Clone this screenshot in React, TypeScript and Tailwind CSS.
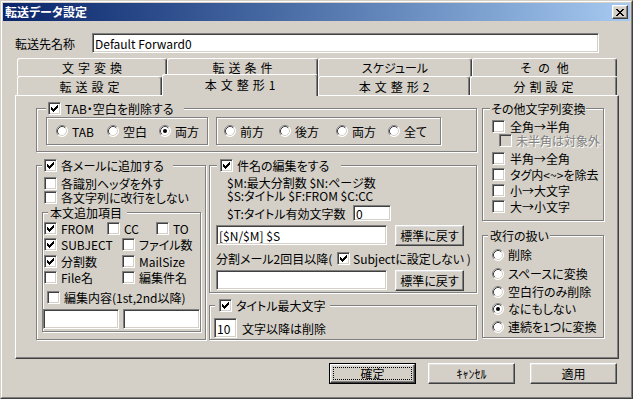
import React from "react";

function CheckMark() {
  return (
    <svg width="7" height="7" viewBox="0 0 7 7" shapeRendering="crispEdges" fill="#000">
      <rect x="6" y="0" width="1" height="1" />
      <rect x="5" y="1" width="2" height="1" />
      <rect x="0" y="2" width="1" height="1" />
      <rect x="4" y="2" width="3" height="1" />
      <rect x="0" y="3" width="2" height="1" />
      <rect x="3" y="3" width="3" height="1" />
      <rect x="0" y="4" width="5" height="1" />
      <rect x="1" y="5" width="3" height="1" />
      <rect x="2" y="6" width="1" height="1" />
    </svg>
  );
}

function Check({ on, dis }: { on?: boolean; dis?: boolean }) {
  return (
    <span
      className={`shrink-0 w-[13px] h-[13px] border border-t-[#808080] border-l-[#808080] border-b-white border-r-white shadow-[inset_1px_1px_0_#404040,inset_-1px_-1px_0_#d4d0c8] flex items-center justify-center ${
        dis ? "bg-[#d4d0c8]" : "bg-white"
      }`}
    >
      {on && <CheckMark />}
    </span>
  );
}

function Radio({ on }: { on?: boolean }) {
  return (
    <svg width="12" height="12" viewBox="0 0 12 12" className="shrink-0">
      <circle cx="6" cy="6" r="5.5" fill="#fff" />
      <path d="M2.11 9.89A5.5 5.5 0 0 1 9.89 2.11" stroke="#808080" fill="none" />
      <path d="M9.89 2.11A5.5 5.5 0 0 1 2.11 9.89" stroke="#fff" fill="none" />
      <path d="M2.82 9.18A4.5 4.5 0 0 1 9.18 2.82" stroke="#404040" fill="none" />
      <path d="M9.18 2.82A4.5 4.5 0 0 1 2.82 9.18" stroke="#d4d0c8" fill="none" />
      {on && <circle cx="6" cy="6" r="2" fill="#000" />}
    </svg>
  );
}

function CItem({
  on,
  className = "",
  children,
}: {
  on?: boolean;
  className?: string;
  children: React.ReactNode;
}) {
  return (
    <div className={`flex items-center gap-[4px] whitespace-nowrap shrink-0 ${className}`}>
      <Check on={on} />
      <span>{children}</span>
    </div>
  );
}

function RItem({
  on,
  className = "",
  children,
}: {
  on?: boolean;
  className?: string;
  children: React.ReactNode;
}) {
  return (
    <div className={`flex items-center gap-[4px] whitespace-nowrap shrink-0 ${className}`}>
      <Radio on={on} />
      <span>{children}</span>
    </div>
  );
}

function Group({
  className = "",
  legendClass = "",
  legend,
  children,
}: {
  className?: string;
  legendClass?: string;
  legend?: React.ReactNode;
  children?: React.ReactNode;
}) {
  return (
    <div
      className={`relative shrink-0 border border-[#808080] shadow-[inset_1px_1px_0_#fff,1px_1px_0_#fff] ${className}`}
    >
      {legend && (
        <div
          className={`absolute top-[-8px] h-[14px] flex items-center gap-[4px] bg-[#d4d0c8] whitespace-nowrap ${legendClass}`}
        >
          {legend}
        </div>
      )}
      {children}
    </div>
  );
}

function Field({ className = "", children }: { className?: string; children?: React.ReactNode }) {
  return (
    <div
      className={`shrink-0 bg-white border border-t-[#808080] border-l-[#808080] border-b-white border-r-white shadow-[inset_1px_1px_0_#404040,inset_-1px_-1px_0_#d4d0c8] flex items-center pl-[2px] whitespace-nowrap overflow-hidden ${className}`}
    >
      {children}
    </div>
  );
}

function Btn({ className = "", children }: { className?: string; children?: React.ReactNode }) {
  return (
    <div
      className={`shrink-0 bg-[#d4d0c8] border border-t-white border-l-white border-r-[#404040] border-b-[#404040] shadow-[inset_-1px_-1px_0_#808080,inset_1px_1px_0_#dfdfdf] flex items-center justify-center whitespace-nowrap ${className}`}
    >
      {children}
    </div>
  );
}

const tabBase =
  "shrink-0 border-t border-l border-r border-t-white border-l-white border-r-[#404040] shadow-[inset_-1px_0_0_#808080] rounded-t-[3px] bg-[#d4d0c8] flex items-center justify-center whitespace-nowrap";

export default function App() {
  return (
    <div className="w-[633px] h-[399px] overflow-hidden bg-[#d4d0c8] border border-t-[#d4d0c8] border-l-[#d4d0c8] border-r-[#404040] border-b-[#404040] text-[12px] leading-[13px] text-black font-['Noto_Sans_CJK_JP',sans-serif] [font-feature-settings:'palt']">
      <div className="h-full border border-t-white border-l-white border-r-[#808080] border-b-[#808080] p-px flex flex-col">
        {/* Title bar */}
        <div className="h-[18px] shrink-0 flex items-center bg-linear-to-r from-[#0a246a] to-[#a6caf0] pl-[2px] pr-[2px]">
          <span className="text-white font-bold text-[12px] leading-[14px]">転送データ設定</span>
          <Btn className="ml-auto w-[16px] h-[14px]">
            <svg width="8" height="7" viewBox="0 0 8 7" shapeRendering="crispEdges" fill="#000" className="ml-[-1px]">
              <rect x="0" y="0" width="2" height="1" />
              <rect x="6" y="0" width="2" height="1" />
              <rect x="1" y="1" width="2" height="1" />
              <rect x="5" y="1" width="2" height="1" />
              <rect x="2" y="2" width="4" height="1" />
              <rect x="3" y="3" width="2" height="1" />
              <rect x="2" y="4" width="4" height="1" />
              <rect x="1" y="5" width="2" height="1" />
              <rect x="5" y="5" width="2" height="1" />
              <rect x="0" y="6" width="2" height="1" />
              <rect x="6" y="6" width="2" height="1" />
            </svg>
          </Btn>
        </div>

        {/* Name row */}
        <div className="mt-[12px] h-[20px] shrink-0 flex items-center pl-[12px]">
          <span className="w-[77px] shrink-0">転送先名称</span>
          <Field className="w-[507px] h-[20px]">Default Forward0</Field>
        </div>

        {/* Tabs */}
        <div className="mt-[5px] ml-[14px] shrink-0 flex flex-col">
          <div className="flex h-[18px]">
            <div className={`${tabBase} h-full w-[150px] tracking-[4px] pl-[4px]`}>文字変換</div>
            <div className={`${tabBase} h-full w-[151px] tracking-[4px] pl-[4px]`}>転送条件</div>
            <div className={`${tabBase} h-full w-[154px]`}>スケジュール</div>
            <div className={`${tabBase} h-full w-[145px] tracking-[7px] pl-[7px]`}>その他</div>
          </div>
          <div className="flex h-[19px] items-start">
            <div className={`${tabBase} h-full w-[145px] tracking-[4px] pl-[4px]`}>転送設定</div>
            <div className={`${tabBase} relative z-10 mt-[-2px] h-[22px] w-[156px] tracking-[4px] pl-[4px] pb-[3px]`}>
              本文整形1
            </div>
            <div className={`${tabBase} h-full w-[152px] tracking-[4px] pl-[4px]`}>本文整形2</div>
            <div className={`${tabBase} h-full w-[147px] tracking-[4px] pl-[4px]`}>分割設定</div>
          </div>
        </div>

        {/* Panel */}
        <div className="ml-[12px] w-[604px] h-[264px] shrink-0 border border-t-white border-l-white border-r-[#404040] border-b-[#404040] shadow-[inset_-1px_-1px_0_#808080] flex pt-[12px] pl-[20px]">
          {/* Left column */}
          <div className="w-[441px] shrink-0 flex flex-col">
            <Group
              className="h-[44px] pt-[8px] pl-[9px] flex"
              legendClass="left-[9px] pl-[2px] pr-[10px]"
              legend={
                <>
                  <Check on />
                  <span>TAB・空白を削除する</span>
                </>
              }
            >
              <Group className="w-[162px] h-[28px] flex items-center pl-[9px]">
                <RItem className="w-[51px]">TAB</RItem>
                <RItem className="w-[52px]">空白</RItem>
                <RItem on>両方</RItem>
              </Group>
              <Group className="ml-[8px] w-[225px] h-[28px] flex items-center pl-[7px]">
                <RItem className="w-[55px]">前方</RItem>
                <RItem className="w-[57px]">後方</RItem>
                <RItem className="w-[52px]">両方</RItem>
                <RItem>全て</RItem>
              </Group>
            </Group>

            <div className="flex mt-[13px]">
              {/* 各メールに追加する */}
              <Group
                className="w-[170px] h-[175px] pt-[10px] pl-[5px] flex flex-col"
                legendClass="left-[5px] pl-[2px] pr-[9px]"
                legend={
                  <>
                    <Check on />
                    <span>各メールに追加する</span>
                  </>
                }
              >
                <CItem className="ml-[2px] h-[14px]">各識別ヘッダを外す</CItem>
                <CItem className="ml-[2px] h-[14px]">各文字列に改行をしない</CItem>
                <Group
                  className="mt-[8px] w-[159px] h-[120px] pt-[9px] pl-[1px] flex flex-col"
                  legendClass="left-[5px] pl-[2px] pr-[5px]"
                  legend={<span>本文追加項目</span>}
                >
                  <div className="flex h-[13px]">
                    <CItem on className="w-[63px]">FROM</CItem>
                    <CItem className="w-[49px]">CC</CItem>
                    <CItem>TO</CItem>
                  </div>
                  <div className="flex h-[13px] mt-[3px]">
                    <CItem on className="w-[78px]">SUBJECT</CItem>
                    <CItem>ファイル数</CItem>
                  </div>
                  <div className="flex h-[13px] mt-[4px]">
                    <CItem on className="w-[78px]">分割数</CItem>
                    <CItem>MailSize</CItem>
                  </div>
                  <div className="flex h-[13px] mt-[3px]">
                    <CItem className="w-[78px]">File名</CItem>
                    <CItem>編集件名</CItem>
                  </div>
                  <div className="flex h-[13px] mt-[7px]">
                    <CItem className="ml-[3px]">編集内容(1st,2nd以降)</CItem>
                  </div>
                  <div className="flex mt-[5px] ml-[-1px] gap-[4px]">
                    <Field className="w-[76px] h-[20px]" />
                    <Field className="w-[77px] h-[20px]" />
                  </div>
                </Group>
              </Group>

              <div className="ml-[3px] w-[268px] shrink-0 flex flex-col">
                {/* 件名の編集をする */}
                <Group
                  className="h-[128px] pt-[10px] pl-[6px] flex flex-col"
                  legendClass="left-[7px] pl-[3px] pr-[12px]"
                  legend={
                    <>
                      <Check on />
                      <span>件名の編集をする</span>
                    </>
                  }
                >
                  <div className="h-[13px] ml-[11px] whitespace-nowrap">$M:最大分割数 $N:ページ数</div>
                  <div className="h-[13px] ml-[11px] whitespace-nowrap">$S:タイトル $F:FROM $C:CC</div>
                  <div className="h-[16px] mt-[3px] ml-[11px] flex items-center">
                    <span className="w-[126px] shrink-0 whitespace-nowrap">$T:タイトル有効文字数</span>
                    <Field className="w-[38px] h-[16px]">0</Field>
                  </div>
                  <div className="flex items-start mt-[4px]">
                    <Field className="w-[171px] h-[20px]">[$N/$M] $S</Field>
                    <Btn className="ml-[8px] w-[69px] h-[21px]">標準に戻す</Btn>
                  </div>
                  <div className="flex items-center h-[14px] mt-[5px] whitespace-nowrap">
                    <span className="w-[121px] shrink-0">分割メール2回目以降(</span>
                    <Check on />
                    <span className="ml-[3px]">Subjectに設定しない )</span>
                  </div>
                  <div className="flex items-start mt-[5px]">
                    <Field className="w-[171px] h-[20px]" />
                    <Btn className="ml-[8px] w-[69px] h-[21px]">標準に戻す</Btn>
                  </div>
                </Group>

                {/* タイトル最大文字 */}
                <Group
                  className="mt-[12px] h-[35px] pt-[12px] pl-[4px] flex items-start"
                  legendClass="left-[5px] pl-[4px] pr-[4px]"
                  legend={
                    <>
                      <Check on />
                      <span>タイトル最大文字</span>
                    </>
                  }
                >
                  <Field className="w-[23px] h-[20px]">10</Field>
                  <span className="ml-[5px] h-[20px] flex items-center whitespace-nowrap">文字以降は削除</span>
                </Group>
              </div>
            </div>
          </div>

          {/* Right column */}
          <div className="ml-[5px] w-[122px] shrink-0 flex flex-col">
            <Group
              className="h-[113px] pt-[11px] pl-[9px] flex flex-col"
              legendClass="left-[7px] px-[1px]"
              legend={<span>その他文字列変換</span>}
            >
              <CItem className="h-[13px] gap-[5px]">全角→半角</CItem>
              <div className="flex items-center gap-[4px] h-[13px] mt-[1px] ml-[7px] whitespace-nowrap">
                <Check dis />
                <span className="text-[#808080] [text-shadow:1px_1px_0_#fff]">未半角は対象外</span>
              </div>
              <CItem className="h-[13px] mt-[5px] gap-[5px]">半角→全角</CItem>
              <CItem className="h-[13px] mt-[3px] gap-[5px]">タグ内&lt;~&gt;を除去</CItem>
              <CItem className="h-[13px] mt-[3px] gap-[5px]">小→大文字</CItem>
              <CItem className="h-[13px] mt-[3px] gap-[5px]">大→小文字</CItem>
            </Group>

            <Group
              className="mt-[14px] h-[103px] pt-[12px] pl-[9px] flex flex-col"
              legendClass="left-[5px] pl-[2px] pr-[1px]"
              legend={<span>改行の扱い</span>}
            >
              <RItem className="h-[13px]">削除</RItem>
              <RItem className="h-[13px] mt-[6px]">スペースに変換</RItem>
              <RItem className="h-[13px] mt-[5px]">空白行のみ削除</RItem>
              <RItem on className="h-[13px] mt-[4px]">なにもしない</RItem>
              <RItem className="h-[13px] mt-[5px]">連続を1つに変換</RItem>
            </Group>
          </div>
        </div>

        {/* Bottom buttons */}
        <div className="mt-[4px] shrink-0 flex pl-[326px]">
          <div className="w-[87px] h-[21px] shrink-0 border border-black flex">
            <div className="flex-1 flex bg-[#d4d0c8] border border-t-white border-l-white border-r-[#404040] border-b-[#404040] shadow-[inset_-1px_-1px_0_#808080,inset_1px_1px_0_#dfdfdf] p-[2px]">
              <div className="flex-1 border border-dotted border-black flex items-center justify-center">確定</div>
            </div>
          </div>
          <Btn className="ml-[12px] w-[87px] h-[21px]">ｷｬﾝｾﾙ</Btn>
          <Btn className="ml-[15px] w-[87px] h-[21px]">適用</Btn>
        </div>
      </div>
    </div>
  );
}
